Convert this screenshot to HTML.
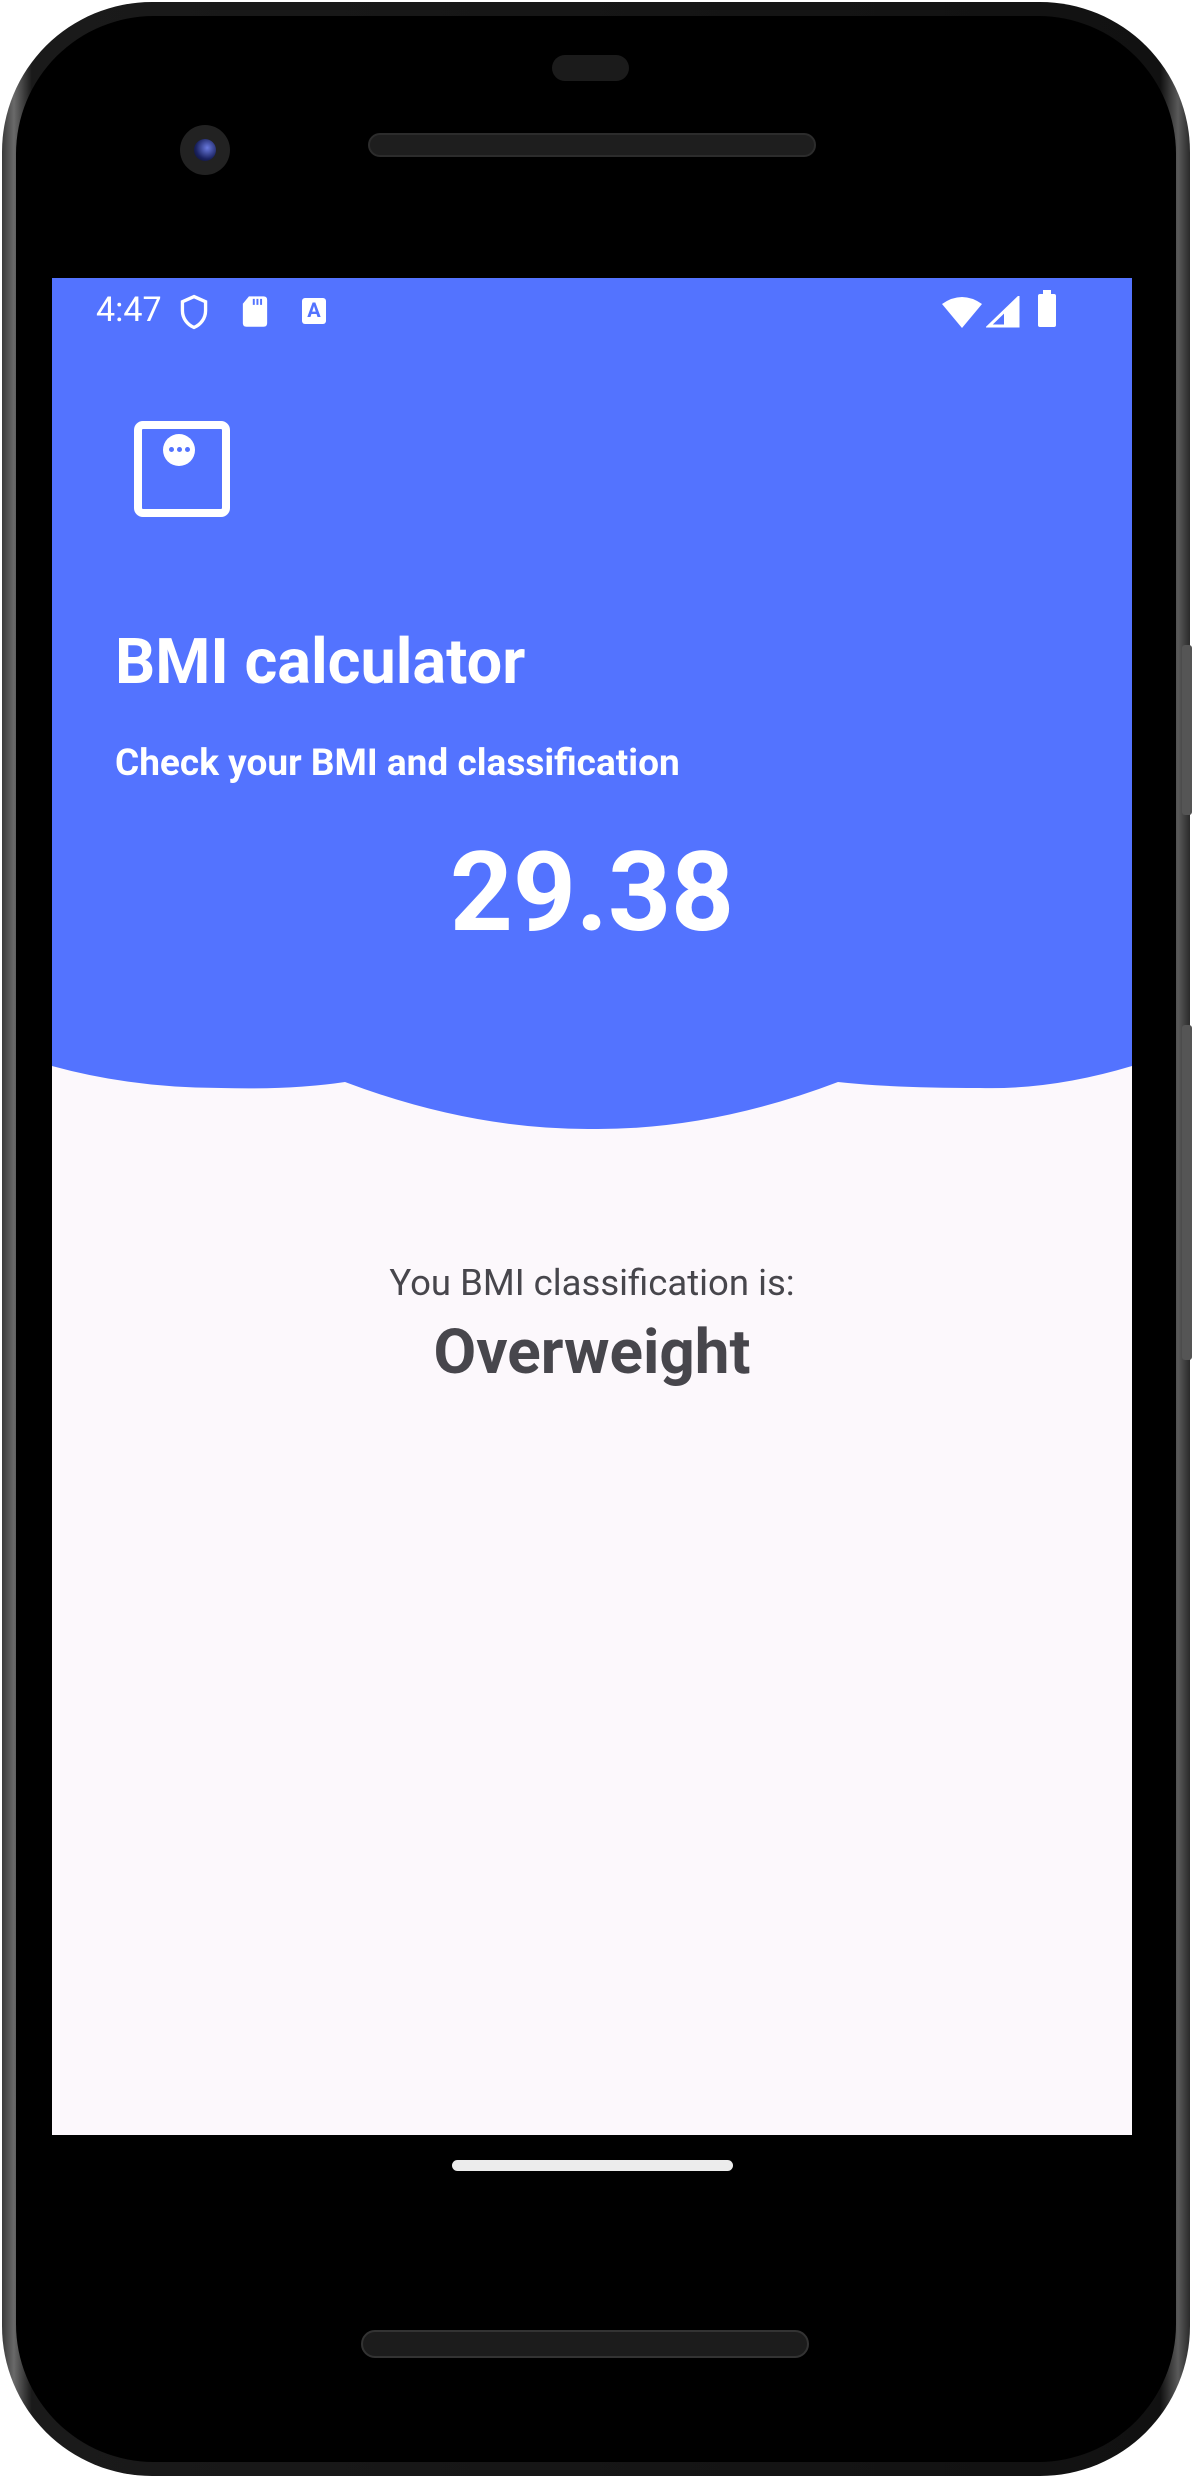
<!DOCTYPE html>
<html><head><meta charset="utf-8">
<style>
html,body{margin:0;padding:0;background:#fff;}
body{width:1194px;height:2480px;position:relative;overflow:hidden;font-family:"Roboto","Liberation Sans",sans-serif;}
.phone{position:absolute;left:2px;top:2px;width:1188px;height:2474px;border-radius:150px;background:linear-gradient(90deg,#3a3a3a,#6a6a6a 1%,#1a1a1a 2.5%,#111 97.5%,#5a5a5a 99%,#2a2a2a);}
.inner{position:absolute;left:14px;top:14px;right:14px;bottom:14px;border-radius:138px;background:#000;}
.screen{position:absolute;left:52px;top:278px;width:1080px;height:1857px;background:#fcf8fc;overflow:hidden;}
.blue{position:absolute;left:0;top:0;width:1080px;height:1140px;}
.abs{position:absolute;}
.txt{color:#fff;font-weight:bold;white-space:nowrap;}
</style></head><body>
<div class="phone"><div class="inner"></div></div>
<div class="abs" style="left:1182px;top:645px;width:10px;height:170px;background:#555;border-radius:3px"></div>
<div class="abs" style="left:1182px;top:1025px;width:10px;height:335px;background:#555;border-radius:3px"></div>
<div class="abs" style="left:552px;top:55px;width:77px;height:26px;border-radius:13px;background:#1b1b1b"></div>
<div class="abs" style="left:368px;top:133px;width:448px;height:24px;border-radius:12px;background:#1e1e1e;border:2px solid #2c2c2c;box-sizing:border-box"></div>
<div class="abs" style="left:180px;top:125px;width:50px;height:50px;border-radius:50%;background:#222"></div>
<div class="abs" style="left:194px;top:139px;width:22px;height:22px;border-radius:50%;background:radial-gradient(circle at 60% 40%,#6a7adf,#1a2260 60%,#0a0a20)"></div>

<div class="screen">
  <svg class="blue" viewBox="0 0 1080 1140" width="1080" height="1140">
    <path fill="#5373ff" d="M0 788 Q80 810 169 810 Q240 812 293 804 Q420 852 541 851 Q660 852 786 804 Q840 810 928 810 Q1000 812 1080 788 V0 H0 Z"/>
  </svg>
  <div class="abs" style="left:44px;top:12px;color:#fff;font-size:34px;">4:47</div>
  <svg class="abs" style="left:126px;top:16px" width="32" height="36" viewBox="0 0 24 28"><path d="M12 2 L21 6 V13 C21 19 17 24 12 26 C7 24 3 19 3 13 V6 Z" fill="none" stroke="#fff" stroke-width="2.6"/></svg>
  <svg class="abs" style="left:188px;top:16px" width="30" height="34" viewBox="0 0 24 28"><path d="M7 2 H19 Q22 2 22 5 V24 Q22 27 19 27 H5 Q2 27 2 24 V8 Z" fill="#fff"/><path d="M11 4V9M14 4V9M17 4V9" stroke="#5373ff" stroke-width="1.6"/></svg>
  <div class="abs" style="left:250px;top:20px;width:24px;height:26px;background:#fff;border-radius:3px;color:#5373ff;font-size:20px;font-weight:bold;text-align:center;line-height:24px">A</div>
  <svg class="abs" style="left:890px;top:18px" width="40" height="32" viewBox="0 0 40 32"><path d="M0 8 Q20 -6 40 8 L20 32 Z" fill="#fff"/></svg>
  <svg class="abs" style="left:934px;top:18px" width="34" height="32" viewBox="0 0 34 32"><path d="M32 2 V30 H3 Z" fill="none" stroke="#fff" stroke-width="3"/><path d="M18 16 L32 3 V30 H18Z" fill="#fff"/></svg>
  <div class="abs" style="left:986px;top:16px;width:18px;height:33px;background:#fff;border-radius:2px"></div>
  <div class="abs" style="left:991px;top:12px;width:8px;height:5px;background:#fff"></div>

  <div class="abs" style="left:82px;top:143px;width:80px;height:80px;border:8px solid #fff;border-radius:9px"></div>
  <div class="abs" style="left:111px;top:156px;width:32px;height:32px;border-radius:50%;background:#fff"></div>
  <div class="abs" style="left:117px;top:169px;width:5px;height:5px;border-radius:50%;background:#5373ff;box-shadow:8px 0 #5373ff,16px 0 #5373ff"></div>

  <div class="abs txt" style="left:63px;top:348px;font-size:63px;">BMI calculator</div>
  <div class="abs txt" style="left:63px;top:464px;font-size:37px;">Check your BMI and classification</div>
  <div class="abs txt" style="left:0;width:1080px;text-align:center;top:550px;font-size:110px;">29.38</div>

  <div class="abs" style="left:0;width:1080px;text-align:center;top:983px;font-size:36.5px;color:#47464c">You BMI classification is:</div>
  <div class="abs" style="left:0;width:1080px;text-align:center;top:1038px;font-size:62px;font-weight:bold;color:#47464c">Overweight</div>
</div>

<div class="abs" style="left:452px;top:2160px;width:281px;height:11px;border-radius:6px;background:#ececec"></div>
<div class="abs" style="left:361px;top:2330px;width:448px;height:28px;border-radius:14px;background:#1c1c1c;border:2px solid #333;box-sizing:border-box"></div>
</body></html>
